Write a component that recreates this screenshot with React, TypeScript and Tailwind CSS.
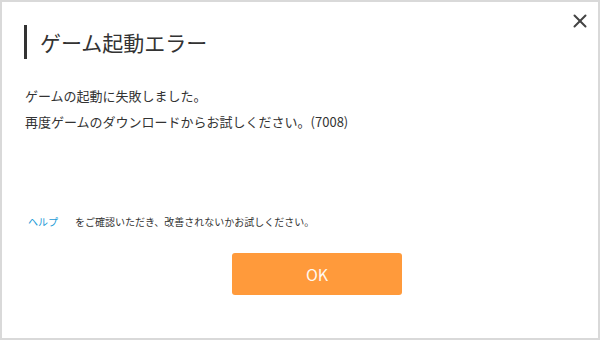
import { X } from "lucide-react"

const jp = { fontFamily: '"Noto Sans CJK JP", "Noto Sans", sans-serif' }

function App() {
  return (
    <div
      className="relative flex h-[340px] w-[600px] flex-col border-2 border-[#d9d9d9] bg-white text-[#333333]"
      style={jp}
    >
      {/* close */}
      <button
        type="button"
        className="absolute right-[7px] top-[8px] flex h-[22px] w-[22px] items-center justify-center text-[#444444]"
      >
        <X size={22} strokeWidth={2.2} />
      </button>

      {/* title */}
      <div className="mt-[23px] flex h-[34px] items-center pl-[22px]">
        <div className="h-[34px] w-[3px] bg-[#333333]" />
        <h1 className="ml-[13px] text-[21px] leading-none font-normal">
          ゲーム起動エラー
        </h1>
      </div>

      {/* message */}
      <div className="mt-[24px] pl-[23px] text-[13px] leading-[26px]">
        <p>ゲームの起動に失敗しました。</p>
        <p>再度ゲームのダウンロードからお試しください。(7008)</p>
      </div>

      {/* help */}
      <div className="mt-[79px] flex items-center pl-[26px] text-[10px] leading-[16px]">
        <a className="w-[47px] text-[#1a9ad6]">ヘルプ</a>
        <span>をご確認いただき、改善されないかお試しください。</span>
      </div>

      {/* ok */}
      <button
        type="button"
        className="mt-[23px] ml-[230px] flex h-[42px] w-[170px] items-center justify-center rounded-[3px] bg-[#ff9a3b] text-[16px] text-[#fff8ef]"
      >
        OK
      </button>
    </div>
  )
}

export default App
